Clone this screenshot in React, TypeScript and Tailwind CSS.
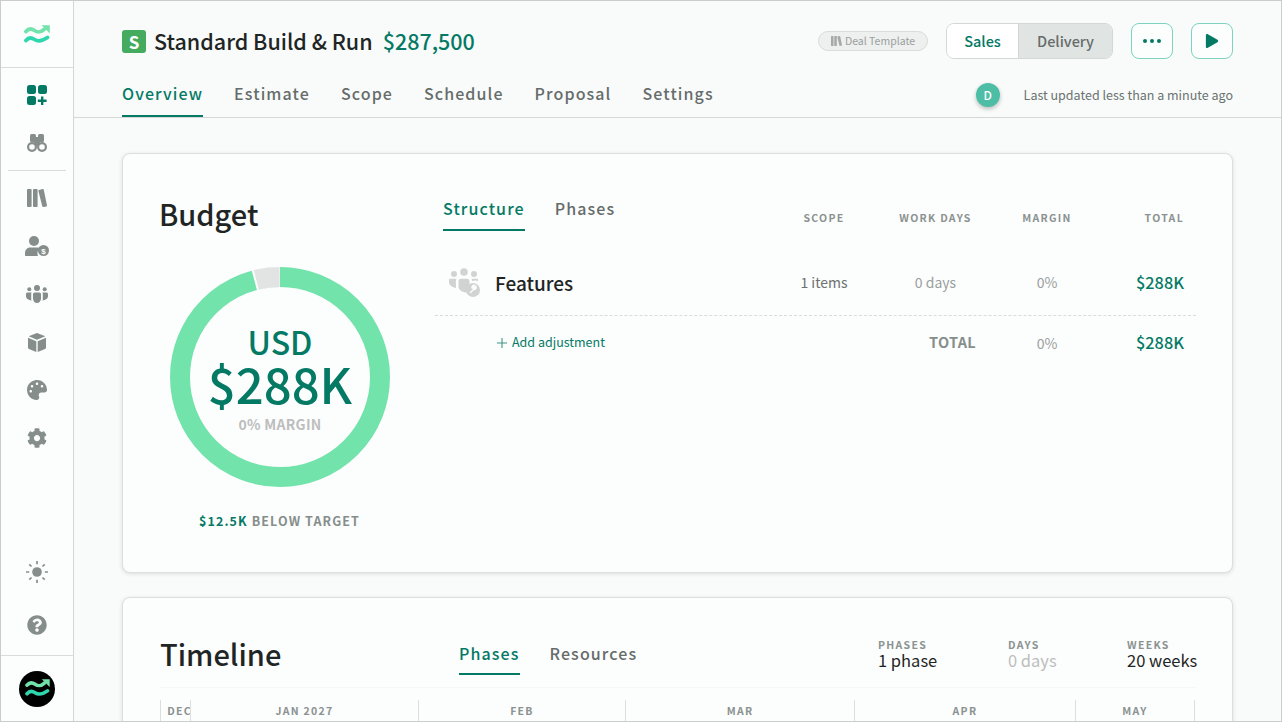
import { FaCog, FaPalette, FaPlay, FaQuestionCircle } from "react-icons/fa";

function Logo({ className }: { className?: string }) {
  return (
    <svg viewBox="0 0 26 20" className={className} fill="none">
      <path d="M2 6.500C4.500 3.500 7.500 3.500 10.500 5.500S16 8 20 4.500" stroke="#72e3ab" strokeWidth="3.800" strokeLinecap="round" />
      <path d="M17.500 .3H25.800V8.500Z" fill="#72e3ab" />
      <path d="M2 15.500C4.500 12.500 7.500 12.500 10.500 14.500S17 17 23.500 12.500" stroke="#30d6ad" strokeWidth="3.800" strokeLinecap="round" />
    </svg>
  );
}

function AppsIcon() {
  return (
    <svg viewBox="0 0 20 20" className="h-5 w-5" fill="#047a65">
      <rect x="0" y="0" width="9" height="9" rx="2.500" />
      <rect x="11" y="0" width="9" height="9" rx="2.500" />
      <rect x="0" y="11" width="9" height="9" rx="2.500" />
      <path d="M14 11.500h2.400v3h3.200v2.600h-3.200v3H14v-3h-3.200v-2.600H14z" />
    </svg>
  );
}

function BinocularsIcon() {
  return (
    <svg viewBox="0 0 20 18" className="h-[18px] w-5" fill="#868e8c">
      <rect x="3" y="0" width="6" height="8" rx="1.500" />
      <rect x="11" y="0" width="6" height="8" rx="1.500" />
      <rect x="7" y="3" width="6" height="9" />
      <circle cx="5" cy="13" r="5" />
      <circle cx="15" cy="13" r="5" />
      <circle cx="5" cy="13" r="2.800" fill="#fcfdfd" />
      <circle cx="15" cy="13" r="2.800" fill="#fcfdfd" />
    </svg>
  );
}

function BooksIcon({ className, fill }: { className: string; fill: string }) {
  return (
    <svg viewBox="0 0 20 18" className={className} fill={fill}>
      <rect x="0" y="0" width="4.600" height="18" rx="1" />
      <rect x="6" y="0" width="4.600" height="18" rx="1" />
      <path d="M12 .9 15.600 0c.5-.1 1 .2 1.100.6L20 16.400c.1.5-.2.9-.7 1l-2.900.6c-.5.1-1-.2-1.100-.7L11.400 1.900c-.1-.5.1-.9.6-1z" />
    </svg>
  );
}

function UserDollarIcon() {
  return (
    <svg viewBox="0 0 24 20" className="h-5 w-6" fill="#868e8c">
      <circle cx="9" cy="5" r="5" />
      <path d="M0 19v-2c0-3.500 2.500-5.500 5.500-5.500h7c1 0 1.900.2 2.700.6A7 7 0 0 0 13 20H1c-.6 0-1-.4-1-1z" />
      <circle cx="18.500" cy="14.500" r="5.500" />
      <text x="18.500" y="17.500" textAnchor="middle" fontSize="8" fontWeight="700" fill="#fcfdfd" fontFamily="Liberation Sans">$</text>
    </svg>
  );
}

function UsersIcon() {
  return (
    <svg viewBox="0 0 22 18" className="h-[18px] w-[22px]" fill="#868e8c">
      <circle cx="11" cy="3" r="3" />
      <circle cx="3.300" cy="4.200" r="2" />
      <circle cx="18.700" cy="4.200" r="2" />
      <path d="M7 9.300c0-1 .8-1.800 1.800-1.800h4.400c1 0 1.800.8 1.800 1.800v4.200c0 2.500-1.800 4.500-4 4.500s-4-2-4-4.500z" />
      <path d="M5.600 7.500c-.3.500-.4 1-.4 1.600v5c0 .5.100 1 .2 1.400C2.400 15.200 0 13.500 0 11V9c0-.8.700-1.500 1.500-1.500z" />
      <path d="M16.400 7.500c.3.500.4 1 .4 1.600v5c0 .5-.1 1-.2 1.400 3-.3 5.400-2 5.400-4.500V9c0-.8-.7-1.500-1.500-1.500z" />
    </svg>
  );
}

function CubeIcon() {
  return (
    <svg viewBox="0 0 18 19" className="h-[19px] w-[18px]" fill="#868e8c">
      <path d="M9 0 17.300 3.300 9 6.800.7 3.300z" />
      <path d="M0 4.700 8.300 8.200V19L1 15.900c-.6-.3-1-.8-1-1.500z" />
      <path d="M18 4.700 9.700 8.200V19l7.300-3.100c.6-.3 1-.8 1-1.500z" />
    </svg>
  );
}

function SunIcon() {
  return (
    <svg viewBox="0 0 22 22" className="h-[22px] w-[22px]" stroke="#868e8c" strokeWidth="1.700" fill="#868e8c">
      <circle cx="11" cy="11" r="4.800" stroke="none" />
      <path d="M11 0v3.200M11 18.800V22M0 11h3.200M18.800 11H22M3.300 3.300l2.200 2.200M16.500 16.500l2.200 2.200M3.300 18.700l2.200-2.200M16.500 5.500l2.200-2.200" fill="none" />
    </svg>
  );
}

function FeatureIcon() {
  return (
    <svg viewBox="0 0 32 30" className="h-[30px] w-8" fill="#d1d3d3">
      <circle cx="15" cy="5" r="3.800" />
      <circle cx="5" cy="7" r="3" />
      <circle cx="25" cy="7" r="3" />
      <path d="M9.500 14c0-1.300 1-2.300 2.300-2.300h6.400c1.300 0 2.300 1 2.300 2.300v3a9 9 0 0 0-2 8.500C13 25.500 9.500 23 9.500 19z" />
      <path d="M7.500 11.700c-.4.700-.6 1.400-.6 2.200v5.300c0 .7.100 1.200.3 1.800C3.500 20.500 0 18 0 15v-2c0-.8.600-1.300 1.300-1.300z" />
      <path d="M22.500 11.700c.4.700.6 1.400.6 2.200l-.8.600a9 9 0 0 1 6.700-.4V13c0-.8-.6-1.300-1.300-1.300z" />
      <circle cx="24" cy="23" r="7" />
      <path d="M21 26l3.300-3.300M24 22.500a2.300 2.300 0 0 0 3-3l-1.400 1.400-1.200-1.200 1.400-1.400a2.300 2.300 0 0 0-2.800 3" stroke="#fcfdfd" strokeWidth="1.300" fill="#fcfdfd" />
    </svg>
  );
}

function SideItem({ children }: { children: React.ReactNode }) {
  return <div className="flex h-12 items-center justify-center">{children}</div>;
}

function Sidebar() {
  return (
    <aside className="flex h-full w-[73px] shrink-0 flex-col border-r border-[#d3d7d6] bg-[#fcfdfd]">
      <div className="flex h-[67px] shrink-0 items-center justify-center border-b border-[#d9dcdb]">
        <Logo className="mt-[2px] h-[20px] w-[26px]" />
      </div>
      <div className="flex flex-col pt-[3px]">
        <SideItem><AppsIcon /></SideItem>
        <SideItem><BinocularsIcon /></SideItem>
      </div>
      <div className="mx-[7px] mt-[3px] mb-[3px] border-t border-[#d9dcdb]" />
      <div className="flex flex-col">
        <SideItem><BooksIcon className="h-[18px] w-5" fill="#868e8c" /></SideItem>
        <SideItem><UserDollarIcon /></SideItem>
        <SideItem><UsersIcon /></SideItem>
        <SideItem><CubeIcon /></SideItem>
        <SideItem><FaPalette className="h-5 w-5 text-[#868e8c]" /></SideItem>
        <SideItem><FaCog className="h-5 w-5 text-[#868e8c]" /></SideItem>
      </div>
      <div className="mt-auto flex flex-col items-center">
        <div className="flex h-[53px] items-center justify-center"><SunIcon /></div>
        <div className="flex h-[53px] items-center justify-center"><FaQuestionCircle className="h-5 w-5 text-[#868e8c]" /></div>
      </div>
      <div className="mt-[4px] flex h-[66px] shrink-0 items-center justify-center border-t border-[#d9dcdb]">
        <div className="flex h-9 w-9 items-center justify-center rounded-full bg-black">
          <Logo className="h-[19px] w-[25px]" />
        </div>
      </div>
    </aside>
  );
}

function Tab({ label, active, className }: { label: string; active?: boolean; className: string }) {
  return (
    <div
      className={`${className} flex items-center border-b-2 text-[16px] font-medium leading-none tracking-[1.100px] ${
        active ? "border-[#047a65] text-[#047a65]" : "border-transparent text-[#666c6a]"
      }`}
    >
      {label}
    </div>
  );
}

function Header() {
  return (
    <header className="shrink-0 border-b border-[#d3d7d6] pl-12 pr-[48px]">
      <div className="flex h-[80px] items-center">
        <div className="flex h-[23px] w-6 items-center justify-center rounded-[3px] bg-[#45ab5f] text-[17px] font-bold leading-none text-white">S</div>
        <div className="ml-[8px] text-[21.500px] font-medium leading-none text-[#1f2524]">Standard Build &amp; Run</div>
        <div className="ml-[10px] text-[21.500px] font-medium leading-none text-[#047a65]">$287,500</div>
        <div className="ml-auto flex h-[20px] w-[110px] items-center justify-center gap-[3px] rounded-full border border-[#d9dcdb] bg-[#eeefef] text-[10.500px] leading-none text-[#9a9f9e]">
          <BooksIcon className="h-[10px] w-[11px]" fill="#a5a9a8" />
          <span>Deal Template</span>
        </div>
        <div className="ml-[18px] flex h-9 w-[167px] overflow-hidden rounded-lg border border-[#d3d7d6] text-[14.500px] font-medium leading-none">
          <div className="flex w-[72px] items-center justify-center border-r border-[#d3d7d6] bg-white text-[#047a65]">Sales</div>
          <div className="flex flex-1 items-center justify-center bg-[#e0e4e3] text-[#666c6a]">Delivery</div>
        </div>
        <div className="ml-[18px] flex h-9 w-[42px] items-center justify-center gap-[3px] rounded-lg border border-[#7dd3bf] bg-[#fcfdfd]">
          <span className="h-[4px] w-[4px] rounded-full bg-[#047a65]" />
          <span className="h-[4px] w-[4px] rounded-full bg-[#047a65]" />
          <span className="h-[4px] w-[4px] rounded-full bg-[#047a65]" />
        </div>
        <div className="ml-[18px] flex h-9 w-[42px] items-center justify-center rounded-lg border border-[#7dd3bf] bg-[#fcfdfd]">
          <FaPlay className="h-[14px] w-[14px] text-[#047a65]" />
        </div>
      </div>
      <div className="flex h-[36px] items-stretch">
        <div className="flex gap-[31px]">
          <Tab label="Overview" active className="h-[36px] pb-[10px]" />
          <Tab label="Estimate" className="h-[36px] pb-[10px]" />
          <Tab label="Scope" className="h-[36px] pb-[10px]" />
          <Tab label="Schedule" className="h-[36px] pb-[10px]" />
          <Tab label="Proposal" className="h-[36px] pb-[10px]" />
          <Tab label="Settings" className="h-[36px] pb-[10px]" />
        </div>
        <div className="ml-auto flex items-start pt-[2px]">
          <div className="flex h-6 w-6 items-center justify-center rounded-full bg-[#4dbda5] text-[12px] font-medium leading-none text-white shadow-[0_2px_4px_rgba(0,0,0,0.25)]">D</div>
          <div className="ml-[24px] text-[12.500px] leading-[24px] text-[#6b7270]">Last updated less than a minute ago</div>
        </div>
      </div>
    </header>
  );
}

const gridCols = "grid grid-cols-[333px_112px_111px_112px_81px] items-center pr-3";
const headCell = "pt-[14px] text-[10.500px] font-bold leading-none tracking-[1.300px] text-[#8b9290]";

function Donut() {
  return (
    <div className="relative h-[220px] w-[220px]">
      <svg viewBox="0 0 220 220" className="h-[220px] w-[220px] -rotate-90">
        <circle cx="110" cy="110" r="100" fill="none" stroke="#72e3ab" strokeWidth="20" />
        <circle cx="110" cy="110" r="100" fill="none" stroke="#fcfdfd" strokeWidth="20.500" strokeDasharray="27 601.300" strokeDashoffset="27" />
        <circle cx="110" cy="110" r="100" fill="none" stroke="#e2e3e3" strokeWidth="20" strokeDasharray="23.600 604.700" strokeDashoffset="25" />
      </svg>
      <div className="absolute inset-0 flex flex-col items-center text-[#047a65]">
        <div className="mt-[58px] text-[32px] font-medium leading-none">USD</div>
        <div className="mt-[1px] text-[49px] font-medium leading-none">$288K</div>
        <div className="mt-[10px] text-[14px] font-bold leading-none tracking-[0.300px] text-[#bcbebd]">0% MARGIN</div>
      </div>
    </div>
  );
}

function BudgetCard() {
  return (
    <section className="flex h-[420px] shrink-0 rounded-lg border border-[#dcdfde] bg-[#fcfdfd] shadow-[0_1px_4px_rgba(0,0,0,0.12)]">
      <div className="w-[312px] shrink-0 pl-[36px] pt-[41px]">
        <h2 className="text-[29px] font-medium leading-[36px] text-[#1f2524]">Budget</h2>
        <div className="ml-[11px] mt-[36px]"><Donut /></div>
        <div className="mt-[28px] pl-[40px] text-[12.500px] font-bold leading-none tracking-[1.100px] text-[#868e8c]">
          <span className="text-[#047a65]">$12.5K</span> BELOW TARGET
        </div>
      </div>
      <div className="w-[761px] shrink-0 pt-[37px]">
        <div className={`${gridCols} h-[40px]`}>
          <div className="flex gap-[30px] pl-2">
            <Tab label="Structure" active className="h-[40px] pb-[4px]" />
            <Tab label="Phases" className="h-[40px] pb-[4px]" />
          </div>
          <div className={`${headCell} text-center`}>SCOPE</div>
          <div className={`${headCell} text-center`}>WORK DAYS</div>
          <div className={`${headCell} text-center`}>MARGIN</div>
          <div className={`${headCell} text-right`}>TOTAL</div>
        </div>
        <div className={`${gridCols} h-[85px] border-b border-dashed border-[#d9dcdb] pt-[18px]`}>
          <div className="flex items-center pl-[14px]">
            <FeatureIcon />
            <span className="ml-[14px] text-[19px] font-medium leading-none text-[#1f2524]">Features</span>
          </div>
          <div className="text-center text-[14px] leading-none text-[#6b7270]">1 items</div>
          <div className="text-center text-[14px] leading-none text-[#9a9f9e]">0 days</div>
          <div className="text-center text-[14px] leading-none text-[#9a9f9e]">0%</div>
          <div className="text-right text-[16.300px] font-medium leading-none text-[#047a65]">$288K</div>
        </div>
        <div className={`${gridCols} h-[53px]`}>
          <div className="col-span-2 flex items-center pl-[62px] text-[12.500px] leading-none text-[#047a65]">
            <svg viewBox="0 0 10 10" className="mr-[5px] h-[10px] w-[10px]" stroke="#3d9685" strokeWidth="1.100">
              <path d="M5 0v10M0 5h10" />
            </svg>
            Add adjustment
          </div>
          <div className="pr-[15px] text-right text-[14.500px] font-bold leading-none tracking-[0.300px] text-[#868e8c]">TOTAL</div>
          <div className="text-center text-[14px] leading-none text-[#9a9f9e]">0%</div>
          <div className="text-right text-[16.300px] font-medium leading-none text-[#047a65]">$288K</div>
        </div>
      </div>
    </section>
  );
}

function Stat({ label, value, muted, className }: { label: string; value: string; muted?: boolean; className: string }) {
  return (
    <div className={`${className} pt-[5px]`}>
      <div className="text-[10.500px] font-bold leading-[13px] tracking-[1.300px] text-[#8b9290]">{label}</div>
      <div className={muted ? "text-[16.500px] leading-[19px] text-[#bcbebd]" : "text-[16.500px] leading-[19px] text-[#1f2524]"}>{value}</div>
    </div>
  );
}

const months = [
  { label: "DEC", w: "w-[30px]" },
  { label: "JAN 2027", w: "w-[228px]" },
  { label: "FEB", w: "w-[207px]" },
  { label: "MAR", w: "w-[229px]" },
  { label: "APR", w: "w-[221px]" },
  { label: "MAY", w: "w-[120px]" },
];

function TimelineCard() {
  return (
    <section className="mt-6 shrink-0 rounded-lg border border-[#dcdfde] bg-[#fcfdfd] pl-[37px] pr-[36px] shadow-[0_1px_4px_rgba(0,0,0,0.12)]">
      <div className="flex h-[90px] border-b border-[#f6f8f7] pt-[35px]">
        <h2 className="w-[299px] shrink-0 text-[29px] font-medium leading-[40px] text-[#1f2524]">Timeline</h2>
        <div className="flex gap-[30px]">
          <Tab label="Phases" active className="h-[42px]" />
          <Tab label="Resources" className="h-[42px]" />
        </div>
        <Stat label="PHASES" value="1 phase" className="ml-auto w-[130px]" />
        <Stat label="DAYS" value="0 days" muted className="w-[119px]" />
        <Stat label="WEEKS" value="20 weeks" className="w-[69px] whitespace-nowrap" />
      </div>
      <div className="mt-[12px] flex">
        {months.map((m, i) => (
          <div
            key={m.label}
            className={`${m.w} ${i === months.length - 1 ? "border-r" : ""} flex h-[30px] justify-center overflow-hidden whitespace-nowrap border-l border-[#dcdfde] pt-[6px] text-[10.500px] font-bold leading-none tracking-[1.300px] text-[#8b9290]`}
          >
            {i === 0 ? <span className="ml-[8px] self-start">DEC</span> : m.label}
          </div>
        ))}
      </div>
    </section>
  );
}

export default function App() {
  return (
    <div className="flex h-[722px] w-[1282px] overflow-hidden border border-[#c9cdcc] bg-[#f8fbfa] font-['Noto_Sans_CJK_SC',sans-serif]">
      <Sidebar />
      <main className="flex min-w-0 flex-1 flex-col overflow-hidden">
        <Header />
        <div className="flex flex-col overflow-hidden pl-12 pr-[48px] pt-[35px]">
          <BudgetCard />
          <TimelineCard />
        </div>
      </main>
    </div>
  );
}
